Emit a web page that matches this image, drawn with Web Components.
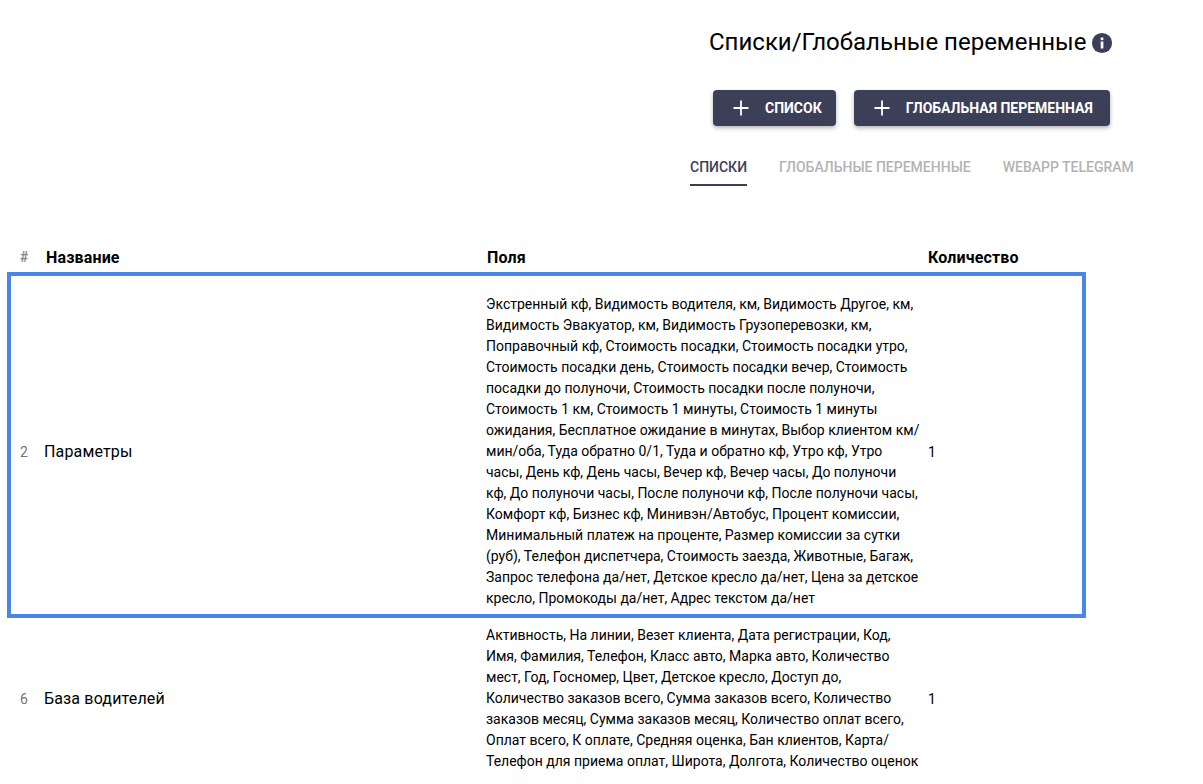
<!DOCTYPE html>
<html lang="ru">
<head>
<meta charset="utf-8">
<title>Списки</title>
<style>
  html, body { margin: 0; padding: 0; height: 784px; overflow: hidden; background: #fff; }
  body { font-family: Roboto, "Liberation Sans", sans-serif; color: #000; }
</style>
</head>
<body>
<page-header title-text="Списки/Глобальные переменные">
  <add-button slot="actions" label="Список"></add-button>
  <add-button slot="actions" label="Глобальная переменная" wide></add-button>
  <tab-item slot="tabs" label="Списки" active></tab-item>
  <tab-item slot="tabs" label="Глобальные переменные"></tab-item>
  <tab-item slot="tabs" label="Webapp Telegram"></tab-item>
</page-header>
<list-table>
  <list-row num="2" name="Параметры" count="1" selected>Экстренный кф, Видимость водителя, км, Видимость Другое, км, Видимость Эвакуатор, км, Видимость Грузоперевозки, км, Поправочный кф, Стоимость посадки, Стоимость посадки утро, Стоимость посадки день, Стоимость посадки вечер, Стоимость посадки до полуночи, Стоимость посадки после полуночи, Стоимость 1 км, Стоимость 1 минуты, Стоимость 1 минуты ожидания, Бесплатное ожидание в минутах, Выбор клиентом км/мин/оба, Туда обратно 0/1, Туда и обратно кф, Утро кф, Утро часы, День кф, День часы, Вечер кф, Вечер часы, До полуночи кф, До полуночи часы, После полуночи кф, После полуночи часы, Комфорт кф, Бизнес кф, Минивэн/Автобус, Процент комиссии, Минимальный платеж на проценте, Размер комиссии за сутки (руб), Телефон диспетчера, Стоимость заезда, Животные, Багаж, Запрос телефона да/нет, Детское кресло да/нет, Цена за детское кресло, Промокоды да/нет, Адрес текстом да/нет</list-row>
  <list-row num="6" name="База водителей" count="1">Активность, На линии, Везет клиента, Дата регистрации, Код, Имя, Фамилия, Телефон, Класс авто, Марка авто, Количество мест, Год, Госномер, Цвет, Детское кресло, Доступ до, Количество заказов всего, Сумма заказов всего, Количество заказов месяц, Сумма заказов месяц, Количество оплат всего, Оплат всего, К оплате, Средняя оценка, Бан клиентов, Карта/Телефон для приема оплат, Широта, Долгота, Количество оценок</list-row>
</list-table>

<script>
class PageHeader extends HTMLElement {
  constructor() {
    super();
    this.attachShadow({ mode: 'open' }).innerHTML = `
      <style>
        :host { display: block; height: 186px; box-sizing: border-box; padding-top: 28px; }
        .title { display: flex; align-items: center; margin-left: 709px; height: 28px; font-size: 24px; line-height: 28px; }
        .title svg { margin-left: 5px; margin-top: 2px; flex: none; }
        .actions { display: flex; gap: 18px; margin: 34px 0 0 713px; }
        .tabs { display: flex; gap: 32px; margin: 24px 0 0 690px; }
      </style>
      <div class="title"><span id="title"></span>
        <svg width="22" height="22" viewBox="0 0 24 24"><circle cx="12" cy="12" r="11" fill="#3c3f58"/><rect x="10.6" y="10.4" width="2.9" height="7.6" fill="#fff"/><rect x="10.6" y="6" width="2.9" height="2.9" fill="#fff"/></svg>
      </div>
      <div class="actions"><slot name="actions"></slot></div>
      <div class="tabs"><slot name="tabs"></slot></div>
    `;
  }
  connectedCallback() {
    this.shadowRoot.getElementById('title').textContent = this.getAttribute('title-text');
  }
}

class AddButton extends HTMLElement {
  constructor() {
    super();
    this.attachShadow({ mode: 'open' }).innerHTML = `
      <style>
        :host { display: block; }
        button {
          display: flex; align-items: center; height: 36px; padding: 0 14px 0 20px; border: 0; border-radius: 4px;
          background: #3c3f58; color: #fff; font: 700 14px/16px Roboto, sans-serif; text-transform: uppercase;
          box-shadow: 0 2px 4px rgba(0,0,0,.3);
        }
        :host([wide]) button { padding-right: 17px; }
        svg { margin-right: 16px; }
      </style>
      <button><svg width="16" height="16" viewBox="0 0 16 16"><path d="M8 0.5v15M0.5 8h15" stroke="#fff" stroke-width="1.8" fill="none"/></svg><span id="label"></span></button>
    `;
  }
  connectedCallback() {
    this.shadowRoot.getElementById('label').textContent = this.getAttribute('label');
  }
}

class TabItem extends HTMLElement {
  constructor() {
    super();
    this.attachShadow({ mode: 'open' }).innerHTML = `
      <style>
        :host { display: block; height: 36px; box-sizing: border-box; padding-top: 9px; color: #b3b3b3;
          font: 500 14px/16px Roboto, sans-serif; text-transform: uppercase; }
        :host([active]) { color: #3c3f58; border-bottom: 2px solid #3c3f58; }
      </style>
      <span id="label"></span>
    `;
  }
  connectedCallback() {
    this.shadowRoot.getElementById('label').textContent = this.getAttribute('label');
  }
}

class ListTable extends HTMLElement {
  constructor() {
    super();
    this.attachShadow({ mode: 'open' }).innerHTML = `
      <style>
        :host { display: block; margin-top: 54px; width: 1079px; margin-left: 7px; }
        .head { display: grid; grid-template-columns: 39px 441px 441px 1fr; height: 32px; padding-top: 2px; box-sizing: border-box;
          align-items: center; font-size: 16px; font-weight: 700; line-height: 19px; letter-spacing: .15px; }
        .hash { color: #8a8a8a; font-size: 14px; font-weight: 700; padding-left: 13px; }
      </style>
      <div class="head"><span class="hash">#</span><span>Название</span><span>Поля</span><span>Количество</span></div>
      <slot></slot>
    `;
  }
}

class ListRow extends HTMLElement {
  constructor() {
    super();
    this.attachShadow({ mode: 'open' }).innerHTML = `
      <style>
        :host { display: block; box-sizing: border-box; }
        :host([selected]) { border: 4px solid #4a86e8; }
        .row { display: grid; grid-template-columns: 33px 442px 442px 1fr; align-items: center; font-size: 14px; padding: 7px 4px 6px; }
        :host([selected]) .row { padding: 18px 0 5px; }
        .num { color: #757575; font-size: 14px; padding-left: 9px; }
        .name { font-size: 16px; letter-spacing: .15px; }
        .fields { width: 434px; line-height: 21px; color: #000; }
      </style>
      <div class="row">
        <span class="num" id="num"></span>
        <span class="name" id="name"></span>
        <div class="fields"><slot></slot></div>
        <span id="count"></span>
      </div>
    `;
  }
  connectedCallback() {
    this.shadowRoot.getElementById('num').textContent = this.getAttribute('num');
    this.shadowRoot.getElementById('name').textContent = this.getAttribute('name');
    this.shadowRoot.getElementById('count').textContent = this.getAttribute('count');
  }
}

customElements.define('page-header', PageHeader);
customElements.define('add-button', AddButton);
customElements.define('tab-item', TabItem);
customElements.define('list-table', ListTable);
customElements.define('list-row', ListRow);
</script>
</body>
</html>
